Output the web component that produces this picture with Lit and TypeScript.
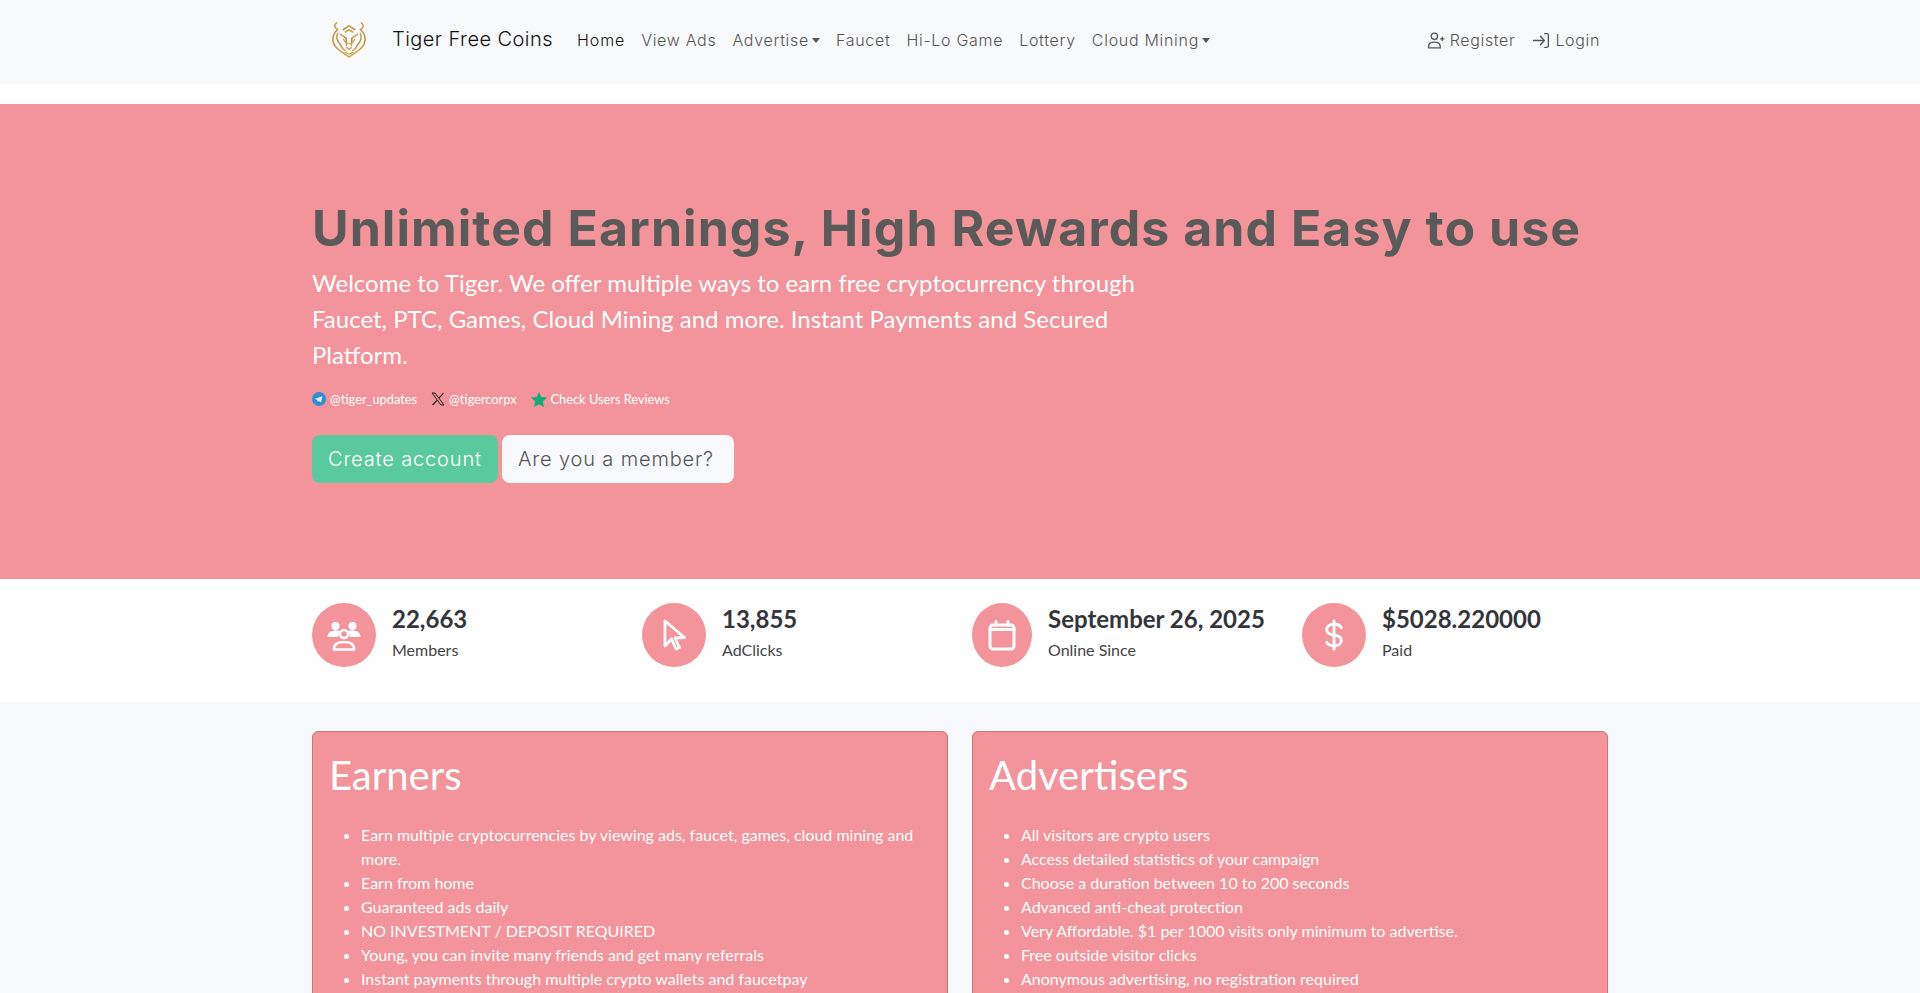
import { LitElement, html, css } from "lit";
import { customElement } from "lit/decorators.js";

const caret = html`<span class="caret"></span>`;

const logo = html`<svg class="logo" viewBox="0 0 40 40" fill="none" stroke="url(#gold)" stroke-width="1.700" stroke-linecap="round" stroke-linejoin="round">
  <defs><linearGradient id="gold" x1="0" y1="0" x2="0" y2="1"><stop offset="0" stop-color="#cba962"/><stop offset="0.5" stop-color="#b98b35"/><stop offset="1" stop-color="#d6ad55"/></linearGradient></defs>
  <path d="M7 2C3 5 6 8 8 9C3 13 2 19 4 24C6 29 10 31 13 33L20 38L27 33C30 31 34 29 36 24C38 19 37 13 32 9C34 8 37 5 33 2"/>
  <path d="M8 13C6 18 8 22 11 25C12 28 14 30 16 31"/>
  <path d="M32 13C34 18 32 22 29 25C28 28 26 30 24 31"/>
  <path d="M14 9L20 5L26 9M16 11.500L20 9.500L24 11.500"/>
  <path d="M11 14L17 18L17.500 26M29 14L23 18L22.500 26"/>
  <path d="M14 19C16 23 18 24 20 24C22 24 24 23 26 19" stroke-width="1.200"/>
  <path d="M16 33L20 35L24 33M17.500 28L20 30L22.500 28" stroke-width="1.300"/>
</svg>`;

const userPlus = html`<svg class="nicon" viewBox="0 0 18 18" fill="none" stroke="currentColor" stroke-width="1.300"><circle cx="7" cy="5" r="3"/><path d="M1.500 16v-1.500C1.500 12 3.500 10.500 7 10.500s5.500 1.500 5.500 4V16z"/><path d="M14.500 5.500v4M12.500 7.500h4"/></svg>`;
const loginIcon = html`<svg class="nicon" viewBox="0 0 18 18" fill="none" stroke="currentColor" stroke-width="1.300" stroke-linecap="round" stroke-linejoin="round"><path d="M1.500 9h10M8 5l3.700 4L8 13"/><path d="M12 2.500h2c1 0 1.500.6 1.500 1.500v10c0 .9-.5 1.500-1.500 1.500h-2"/></svg>`;

const usersIcon = html`<svg class="sicon" viewBox="0 0 36 36" fill="none" stroke="#fff" stroke-width="2.500" stroke-linecap="round" stroke-linejoin="round">
  <circle cx="9.500" cy="9" r="4" fill="#fff" stroke="none"/><circle cx="26.500" cy="9" r="4" fill="#fff" stroke="none"/>
  <path d="M1.500 20c0-4.500 3.500-6.500 8-6.500 2 0 3.500.4 4.500 1.200-1 1.200-1.700 3-1.700 5.300z" fill="#fff" stroke="none"/>
  <path d="M34.500 20c0-4.500-3.500-6.500-8-6.500-2 0-3.500.4-4.500 1.200 1 1.200 1.700 3 1.700 5.300z" fill="#fff" stroke="none"/>
  <circle cx="18" cy="17" r="4"/>
  <path d="M8 32.500v-1C8 27 12 25 18 25s10 2 10 6.500v1z"/>
</svg>`;
const cursorIcon = html`<svg class="sicon" viewBox="0 0 36 36" fill="none" stroke="#fff" stroke-width="2.800" stroke-linecap="round" stroke-linejoin="round"><path d="M9 4v25l6.500-7 4.500 10 3.500-1.500-4.500-9.500 9.500-.5z"/></svg>`;
const calIcon = html`<svg class="sicon" viewBox="0 0 36 36" fill="none" stroke="#fff" stroke-width="3" stroke-linecap="round" stroke-linejoin="round"><rect x="6" y="8" width="24" height="24" rx="3"/><path d="M12 4.500v4M24 4.500v4"/><path d="M6 12.500h24" stroke-width="3"/></svg>`;
const dollarIcon = html`<svg class="sicon" viewBox="-3 -3 42 42" fill="none" stroke="#fff" stroke-width="3.400" stroke-linecap="round" stroke-linejoin="round"><path d="M18 1.500v33"/><path d="M26.500 9.500C25.500 7 22 5.500 18 5.500c-5 0-8.500 2.500-8.500 6.300s3.500 5.500 8.500 6.200 8.500 2.500 8.500 6.300-3.500 6.200-8.500 6.200c-4 0-7.500-1.500-8.500-4"/></svg>`;

const telegram = html`<svg class="sm" viewBox="0 0 14 14"><circle cx="7" cy="7" r="7" fill="#2b8fd6"/><path d="M2.800 7l7.600-3-1.200 6.600-2.400-1.700-1.200 1.200-.3-2z" fill="#dcecf7"/></svg>`;
const xIcon = html`<svg class="sm" viewBox="0 0 14 14" fill="none" stroke="#1a1a1a"><path d="M1 1h3l9 12h-3z" stroke-width="1"/><path d="M12.500 1L8 6M6 8.300L1.500 13" stroke-width="1.100"/></svg>`;
const star = html`<svg class="sm star" viewBox="0 0 16 15"><path d="M8 0l2.300 5 5.700.6-4.200 3.800 1.200 5.600L8 12.200 3 15l1.200-5.600L0 5.600 5.700 5z" fill="#0fae77"/></svg>`;

const stats = [
  { icon: usersIcon, v: "22,663", l: "Members", c: "" },
  { icon: cursorIcon, v: "13,855", l: "AdClicks", c: "" },
  { icon: calIcon, v: "September 26, 2025", l: "Online Since", c: "narrow" },
  { icon: dollarIcon, v: "$5028.220000", l: "Paid", c: "" },
];

const earners = [
  "Earn multiple cryptocurrencies by viewing ads, faucet, games, cloud mining and more.",
  "Earn from home",
  "Guaranteed ads daily",
  "NO INVESTMENT / DEPOSIT REQUIRED",
  "Young, you can invite many friends and get many referrals",
  "Instant payments through multiple crypto wallets and faucetpay",
];
const advertisers = [
  "All visitors are crypto users",
  "Access detailed statistics of your campaign",
  "Choose a duration between 10 to 200 seconds",
  "Advanced anti-cheat protection",
  "Very Affordable. $1 per 1000 visits only minimum to advertise.",
  "Free outside visitor clicks",
  "Anonymous advertising, no registration required",
];

@customElement("app-root")
export class AppRoot extends LitElement {
  static styles = css`
    :host { display: block; height: 993px; overflow: hidden; background: #f8f9fc; font-family: "Lato", sans-serif; font-size: 16px; line-height: 24px; color: #3a3b45; }
    .wrap { width: 1296px; margin: 0 auto; }
    .top { background: #f8f9fb; height: 84px; }
    .top .wrap { display: flex; align-items: center; height: 80px; font-family: "Inter", sans-serif; font-weight: 300; color: #555; }
    .brand { display: flex; align-items: center; width: 265px; font-size: 20px; line-height: 22px; color: #111; flex: none; letter-spacing: 0.45px; }
    .brand span { padding-bottom: 2px; }
    .logo { width: 38px; height: 38px; margin: 0 24px 0 18px; flex: none; }
    .nav { display: flex; flex: 1; align-items: center; }
    .nav a { white-space: nowrap; margin-right: 16px; font-size: 16px; letter-spacing: 0.7px; }
    .nav a.active { color: #111; font-weight: 350; letter-spacing: 0.9px; }
    .caret { display: inline-block; margin-left: 3px; vertical-align: 3px; border-top: 5px solid #555; border-left: 4.500px solid transparent; border-right: 4.500px solid transparent; }
    .auth { display: flex; align-items: center; gap: 16px; margin-right: 8px; font-size: 16px; letter-spacing: 0.65px; }
    .auth a { display: flex; align-items: center; gap: 3px; }
    .nicon { width: 21px; height: 19px; }
    .spacer { height: 20px; background: #fff; }
    .hero { background: #f29499; height: 475px; box-sizing: border-box; padding-top: 95px; }
    h1.title { margin: 0; font-family: "Inter", sans-serif; font-weight: 700; font-size: 50px; line-height: 58px; letter-spacing: 1.06px; color: #5a5a5a; white-space: nowrap; }
    .lead { margin: 8px 0 0; width: 850px; font-size: 24px; line-height: 36px; color: #fff; font-weight: 400; }
    .links { display: flex; align-items: center; margin-top: 17px; font-size: 12.800px; line-height: 18px; color: #fff; }
    .links span { display: flex; align-items: center; margin-right: 14px; gap: 4px; }
    .sm { width: 14px; height: 14px; flex: none; }
    .star { width: 16px; height: 15px; }
    .btns { display: flex; gap: 4px; margin-top: 27px; }
    .btn { display: block; height: 48px; box-sizing: border-box; padding: 0 16px; border-radius: 8px; font-family: "Inter", sans-serif; font-weight: 300; font-size: 20px; line-height: 48px; letter-spacing: 0.85px; white-space: nowrap; }
    .btn.a { background: #5ac99e; color: #fff; width: 186px; }
    .btn.b { background: #f8f9fc; color: #555; width: 232px; }
    .stats { background: #fff; height: 123px; }
    .stats .wrap { display: grid; grid-template-columns: repeat(4, 330px); padding-top: 24px; }
    .stat { display: flex; }
    .circle { width: 64px; height: 64px; border-radius: 50%; background: #f29499; display: flex; align-items: center; justify-content: center; margin-right: 16px; flex: none; }
    .circle.narrow { width: 60px; }
    .sicon { width: 36px; height: 36px; }
    .text { padding-top: 1px; }
    .val { font-size: 24px; line-height: 29px; font-weight: 700; color: #33353a; white-space: nowrap; }
    .lab { font-size: 16px; line-height: 24px; margin-top: 5px; color: #444; }
    .cards { display: grid; grid-template-columns: 1fr 1fr; gap: 24px; padding-top: 29px; }
    .card { background: #f29499; border: 1px solid #c9767c; border-radius: 6px; padding: 16px; color: #fff; height: 400px; }
    .card h2 { margin: 0; font-size: 40px; line-height: 48px; font-weight: 400; padding-top: 3px; }
    .card ul { margin: 24px 0 0; padding-left: 32px; }
  `;

  render() {
    return html`
      <div class="top"><div class="wrap">
        <div class="brand">${logo}<span>Tiger Free Coins</span></div>
        <div class="nav">
          <a class="active">Home</a><a>View Ads</a><a>Advertise${caret}</a><a>Faucet</a><a>Hi-Lo Game</a><a>Lottery</a><a>Cloud Mining${caret}</a>
        </div>
        <div class="auth"><a>${userPlus}Register</a><a>${loginIcon}Login</a></div>
      </div></div>
      <div class="spacer"></div>
      <div class="hero"><div class="wrap">
        <h1 class="title">Unlimited Earnings, High Rewards and Easy to use</h1>
        <p class="lead">Welcome to Tiger. We offer multiple ways to earn free cryptocurrency through Faucet, PTC, Games, Cloud Mining and more. Instant Payments and Secured Platform.</p>
        <div class="links"><span>${telegram}@tiger_updates</span><span>${xIcon}@tigercorpx</span><span>${star}Check Users Reviews</span></div>
        <div class="btns"><a class="btn a">Create account</a><a class="btn b">Are you a member?</a></div>
      </div></div>
      <div class="stats"><div class="wrap">
        ${stats.map((s) => html`<div class="stat"><div class="circle ${s.c}">${s.icon}</div><div class="text"><div class="val">${s.v}</div><div class="lab">${s.l}</div></div></div>`)}
      </div></div>
      <div class="wrap cards">
        <div class="card"><h2>Earners</h2><ul>${earners.map((t) => html`<li>${t}</li>`)}</ul></div>
        <div class="card"><h2>Advertisers</h2><ul>${advertisers.map((t) => html`<li>${t}</li>`)}</ul></div>
      </div>
    `;
  }
}
